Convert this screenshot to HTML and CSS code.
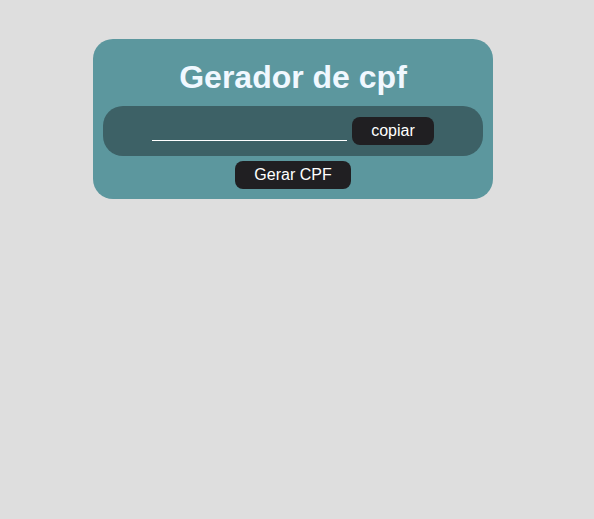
FILE: index.html
```html
<!DOCTYPE html>
<html lang="pt">
<head>
<meta charset="utf-8">
<title>Gerador de cpf</title>
<link rel="stylesheet" href="styles.css">
</head>
<body>
<div class="page">
  <div class="card">
    <h1 class="title">Gerador de cpf</h1>
    <div class="field">
      <input class="cpf-input" type="text">
      <button class="btn copy">copiar</button>
    </div>
    <button class="btn generate">Gerar CPF</button>
  </div>
</div>
</body>
</html>
```
FILE: styles.css
```css
html, body {
  margin: 0;
  padding: 0;
  background: #dedede;
  font-family: "Liberation Sans", Arial, sans-serif;
}
.page {
  display: flex;
  justify-content: center;
  padding: 39px 8px 0 0;
}
.card {
  width: 400px;
  box-sizing: border-box;
  background: #5c979e;
  border-radius: 20px;
  padding: 10px;
  display: flex;
  flex-direction: column;
  align-items: center;
}
.title {
  margin: 10px 0;
  font-size: 32px;
  line-height: 37px;
  font-weight: bold;
  color: #f0f8ff;
  text-align: center;
}
.field {
  width: 380px;
  height: 50px;
  box-sizing: border-box;
  background: #3d6166;
  border-radius: 20px;
  display: flex;
  align-items: center;
  justify-content: center;
  gap: 5px;
}
.cpf-input {
  width: 195px;
  height: 20px;
  box-sizing: border-box;
  margin: 0;
  padding: 0;
  border: none;
  border-bottom: 1px solid #ffffff;
  background: transparent;
  color: #ffffff;
  font-family: inherit;
  font-size: 16px;
  outline: none;
}
.btn {
  height: 28px;
  border: none;
  border-radius: 8px;
  background: #201f22;
  color: #ffffff;
  font-family: "Liberation Sans", Arial, sans-serif;
  font-size: 16px;
  padding: 0;
  cursor: pointer;
}
.copy {
  width: 82px;
}
.generate {
  width: 116px;
  margin-top: 5px;
}
```
